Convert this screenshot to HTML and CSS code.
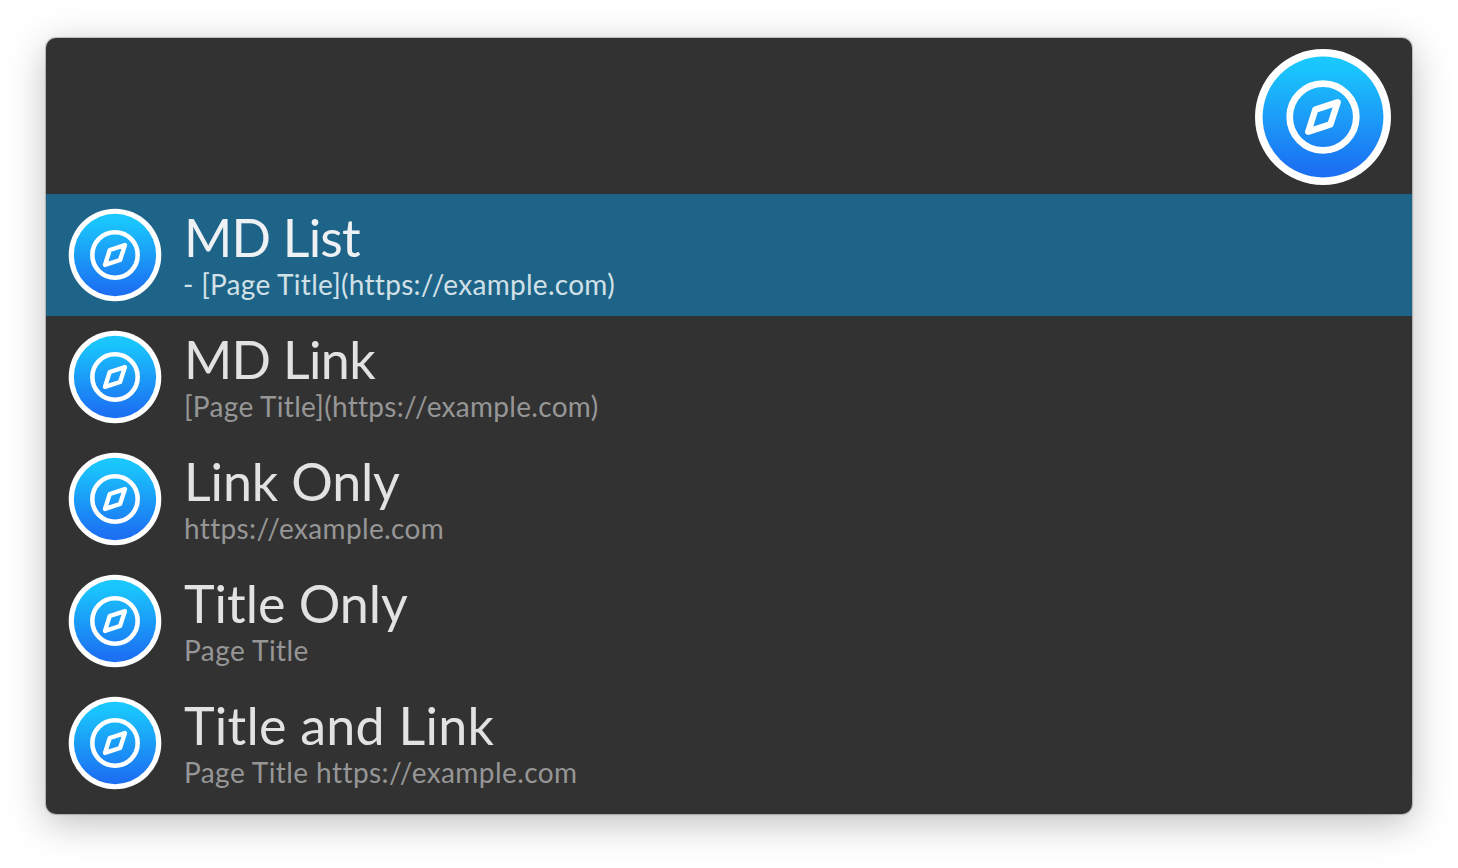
FILE: index.html
```html
<!DOCTYPE html>
<html lang="en">
<head>
<meta charset="utf-8">
<title>Launcher</title>
<link rel="stylesheet" href="styles.css">
</head>
<body>
<svg class="defs" width="0" height="0" aria-hidden="true">
  <defs>
    <linearGradient id="sky" x1="0" y1="0" x2="0" y2="1">
      <stop offset="0" stop-color="#1ac9fe"/>
      <stop offset="0.12" stop-color="#1ac3fc"/>
      <stop offset="0.92" stop-color="#1c72f3"/>
      <stop offset="1" stop-color="#1c70f3"/>
    </linearGradient>
    <symbol id="compass" viewBox="-1 -1 138 138">
      <circle cx="68" cy="68" r="68" fill="#fff"/>
      <circle cx="68" cy="68" r="60.4" fill="url(#sky)"/>
      <circle cx="68" cy="68" r="33.3" fill="none" stroke="#fff" stroke-width="6.7"/>
      <path d="M82.6 53.4 L60.3 60.6 L53.3 82.6 L75.4 75.4 Z" fill="none" stroke="#fff" stroke-width="6.4" stroke-linejoin="round"/>
    </symbol>
  </defs>
</svg>
<main class="panel">
  <header class="search"><svg class="icon-large"><use href="#compass"/></svg></header>
  <ul class="results">
    <li class="row selected">
      <svg class="icon"><use href="#compass"/></svg>
      <div class="text"><div class="title t1">MD List</div><div class="sub s1">- [Page Title](https:<span class="slash">/</span>/example.com)</div></div>
    </li>
    <li class="row">
      <svg class="icon"><use href="#compass"/></svg>
      <div class="text"><div class="title t2">MD Link</div><div class="sub s2">[Page Title](https:<span class="slash">/</span>/example.com)</div></div>
    </li>
    <li class="row">
      <svg class="icon"><use href="#compass"/></svg>
      <div class="text"><div class="title t3">Link Only</div><div class="sub s3">https:<span class="slash">/</span>/example.com</div></div>
    </li>
    <li class="row">
      <svg class="icon"><use href="#compass"/></svg>
      <div class="text"><div class="title t4">Title Only</div><div class="sub s4">Page Title</div></div>
    </li>
    <li class="row">
      <svg class="icon"><use href="#compass"/></svg>
      <div class="text"><div class="title t5">Title and Link</div><div class="sub s5">Page Title https:<span class="slash">/</span>/example.com</div></div>
    </li>
  </ul>
</main>
</body>
</html>
```
FILE: styles.css
```css
* { box-sizing: border-box; }
body {
  margin: 0;
  height: 868px;
  padding: 38px 46px 54px;
  background: #fff;
  font-family: Lato, "Liberation Sans", sans-serif;
  overflow: hidden;
}
.defs { display: block; width: 0; height: 0; }
.panel {
  height: 776px;
  background: #323232;
  border-radius: 10px;
  overflow: hidden;
  box-shadow: 0 0 1px 1px rgba(0, 0, 0, 0.22), 0 9px 38px rgba(0, 0, 0, 0.26);
}
.search {
  height: 156px;
  display: flex;
  justify-content: flex-end;
  padding: 10px 20px 0 0;
}
.icon-large { width: 138px; height: 138px; }
.results { margin: 0; padding: 0; list-style: none; }
.row {
  height: 122px;
  display: flex;
  align-items: flex-start;
  gap: 22px;
  padding: 0 0 0 22px;
  color: #e2e2e2;
}
.icon { width: 94px; height: 94px; margin-top: 14px; flex: none; }
.text { padding-top: 17px; white-space: nowrap; }
.title { font-size: 52px; line-height: 52px; }
.sub {
  margin-top: 5px;
  font-size: 28px;
  line-height: 32px;
  color: #969696;
  font-variant-ligatures: none;
}
.slash { letter-spacing: -1.8px; }
.t1 { letter-spacing: -0.8px; }
.t2 { letter-spacing: -0.7px; }
.t3 { letter-spacing: -0.15px; }
.t5 { letter-spacing: 0.25px; }
.s1 { letter-spacing: 0.28px; margin-left: -1px; }
.s2 { letter-spacing: 0.3px; }
.s3 { letter-spacing: 0.35px; }
.s4 { letter-spacing: 0.45px; }
.s5 { letter-spacing: 0.42px; }
.selected { background: #1e6488; color: #eef2f5; }
.selected .sub { color: #d2e0e7; }
```
